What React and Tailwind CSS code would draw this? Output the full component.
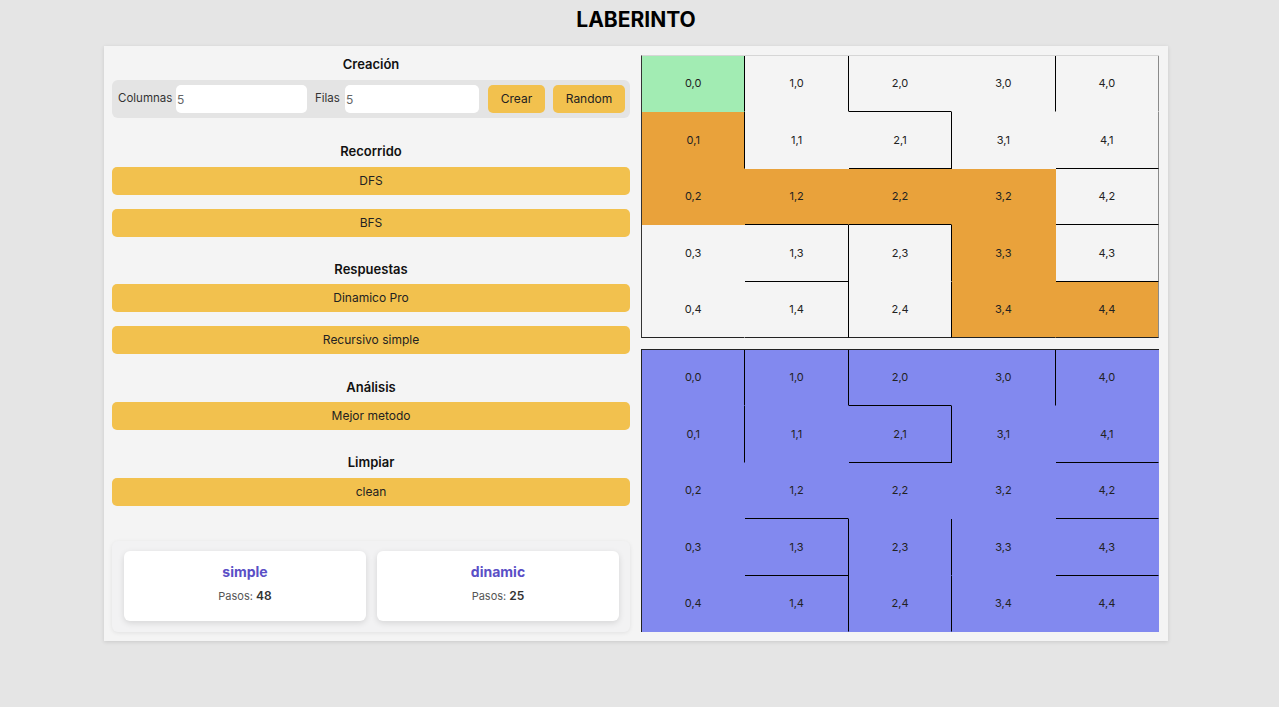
import clsx from "clsx";

const TOP_PATH = ["0,1", "0,2", "1,2", "2,2", "3,2", "3,3", "3,4", "4,4"];
const RIGHT_WALLS = ["0,0", "0,1", "1,0", "2,1", "3,0", "1,3", "1,4", "2,3", "2,4"];
const TOP_BOTTOM_WALLS = ["2,0", "2,1", "4,1", "1,2", "2,2", "4,2", "1,3", "4,3"];
const BLUE_BOTTOM_WALLS = ["2,0", "2,1", "4,1", "1,2", "4,2", "1,3", "4,3"];

function Maze({bottomWalls, cellColor, outer, edgeR, edgeB}) {
    const cells = [];
    for (let r = 0; r < 5; r++) {
        for (let c = 0; c < 5; c++) {
            const key = `${c},${r}`;
            const wallR = RIGHT_WALLS.includes(key);
            const wallB = bottomWalls.includes(key);
            cells.push(
                <div
                    key={key}
                    className={clsx(
                        "flex items-center justify-center text-[11px] text-[#222] border-r border-b",
                        cellColor(key),
                        wallR ? "border-r-black" : c === 4 ? edgeR : "border-r-transparent",
                        wallB ? "border-b-black" : r === 4 ? edgeB : "border-b-transparent"
                    )}
                >
                    {key}
                </div>
            );
        }
    }
    return (
        <div className={clsx("grid grid-cols-5 grid-rows-5 h-[283px] w-[518px] border-l border-t", outer)}>
            {cells}
        </div>
    );
}

function Heading({children, className}) {
    return <h2 className={clsx("text-[13px] leading-5 font-semibold text-[#111] text-center", className)}>{children}</h2>;
}

function Btn({children}) {
    return (
        <button className="h-7 w-full rounded-[5px] bg-[#f2c14e] text-xs text-[#222]">{children}</button>
    );
}

function Card({title, steps}) {
    return (
        <div className="flex-1 h-[70px] bg-white rounded-md shadow-[0_2px_6px_rgba(0,0,0,0.12)] flex flex-col items-center justify-center gap-[6px] pb-[6px]">
            <p className="text-[14px] font-bold text-[#5a4fc6] leading-5">{title}</p>
            <p className="text-[11px] text-[#555] leading-4">Pasos: <span className="font-semibold text-[#333] text-xs">{steps}</span></p>
        </div>
    );
}

export default function App() {
    return (
        <div className="min-h-screen bg-[#e5e5e5] font-['Inter','Noto_Sans',sans-serif]">
            <div className="w-[1272px] flex flex-col items-center">
                <h1 className="pt-[6px] leading-7 text-[21px] font-bold text-black">LABERINTO</h1>

                <div className="mt-3 w-[1064px] bg-[#f4f4f4] shadow-[0_1px_4px_rgba(0,0,0,0.12)] flex gap-[11px] pl-2 pr-[9px] py-[9px]">

                    {/* -- Controles ------------------------------------------------ */}
                    <div className="w-[518px] flex flex-col">
                        <Heading className="-mt-px">Creación</Heading>
                        <div className="mt-[6px] h-[38px] bg-[#e4e4e4] rounded-md flex items-center pl-[6px] text-[11.5px] text-[#333]">
                            <span className="w-[58px]">Columnas</span>
                            <input defaultValue="5" className="w-[131px] h-7 bg-white rounded-[5px] px-px text-xs text-[#666] outline-none"/>
                            <span className="ml-[8px] w-[30px]">Filas</span>
                            <input defaultValue="5" className="w-[134px] h-7 bg-white rounded-[5px] px-px text-xs text-[#666] outline-none"/>
                            <button className="ml-[9px] w-[57px] h-7 rounded-[5px] bg-[#f2c14e] text-xs text-[#222]">Crear</button>
                            <button className="ml-2 w-[72px] h-7 rounded-[5px] bg-[#f2c14e] text-xs text-[#222]">Random</button>
                        </div>

                        <Heading className="mt-[23px]">Recorrido</Heading>
                        <div className="mt-[6px] flex flex-col gap-[14px]">
                            <Btn>DFS</Btn>
                            <Btn>BFS</Btn>
                        </div>

                        <Heading className="mt-[22px]">Respuestas</Heading>
                        <div className="mt-[5px] flex flex-col gap-[14px]">
                            <Btn>Dinamico Pro</Btn>
                            <Btn>Recursivo simple</Btn>
                        </div>

                        <Heading className="mt-[23px]">Análisis</Heading>
                        <div className="mt-[5px]">
                            <Btn>Mejor metodo</Btn>
                        </div>

                        <Heading className="mt-[22px]">Limpiar</Heading>
                        <div className="mt-[6px]">
                            <Btn>clean</Btn>
                        </div>

                        <div className="mt-[35px] h-[91px] bg-[#f2f2f3] rounded-md shadow-[0_1px_4px_rgba(0,0,0,0.08)] flex gap-[11px] pl-3 pr-[11px] pt-[10px] pb-[11px]">
                            <Card title="simple" steps="48"/>
                            <Card title="dinamic" steps="25"/>
                        </div>
                    </div>

                    {/* -- Laberintos ------------------------------------------------ */}
                    <div className="w-[518px] flex flex-col gap-[11px]">
                        <Maze
                            bottomWalls={TOP_BOTTOM_WALLS}
                            cellColor={key => key === "0,0" ? "bg-[#a2ecb3]" : TOP_PATH.includes(key) ? "bg-[#e9a23b]" : "bg-[#f4f4f4]"}
                            outer="border-l-[#333] border-t-[#d6d6d6]"
                            edgeR="border-r-[#8a8a8a]"
                            edgeB="border-b-[#222]"
                        />
                        <Maze
                            bottomWalls={BLUE_BOTTOM_WALLS}
                            cellColor={() => "bg-[#8289ef]"}
                            outer="border-l-[#222] border-t-[#222]"
                            edgeR="border-r-transparent"
                            edgeB="border-b-transparent"
                        />
                    </div>
                </div>
            </div>
        </div>
    );
}
